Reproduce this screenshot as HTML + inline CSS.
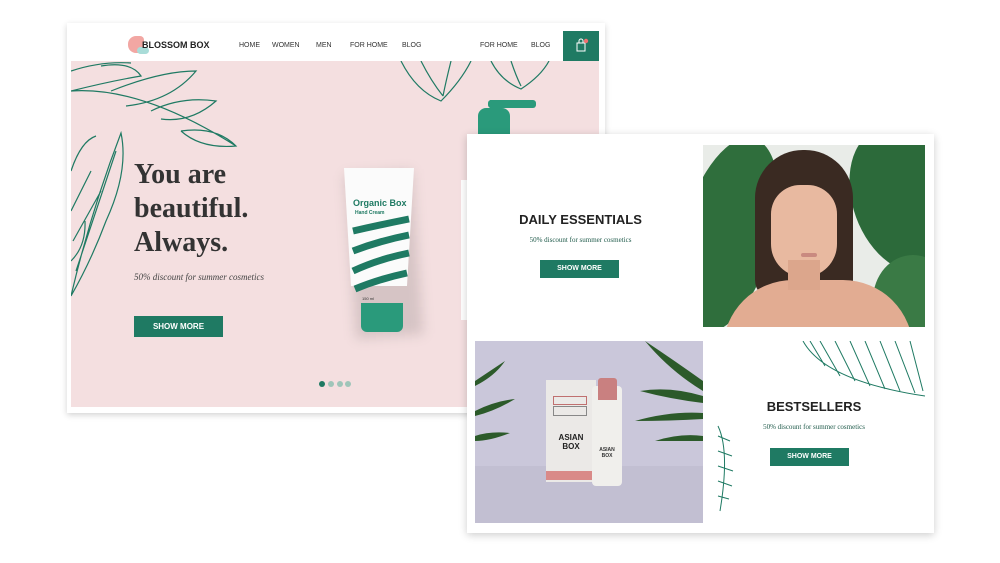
<!DOCTYPE html>
<html><head><meta charset="utf-8"><style>
*{margin:0;padding:0;box-sizing:border-box}
body{width:1000px;height:563px;background:#fff;position:relative;overflow:hidden;font-family:"Liberation Sans",sans-serif}
.abs{position:absolute}
.card1{left:67px;top:23px;width:538px;height:390px;background:#fff;box-shadow:0 2px 6px rgba(0,0,0,.18)}
.nav{font-size:7px;color:#333;top:42px}
.btn{background:#1f7a63;color:#fff;font-size:8px;text-align:center;font-weight:bold}
.serif{font-family:"Liberation Serif",serif}
</style></head><body>
<div class="abs card1"></div>
<!-- nav -->
<div class="abs" style="left:128px;top:36px;width:16px;height:17px;background:#f2a7a3;border-radius:8px 4px 6px 8px"></div>
<div class="abs" style="left:137px;top:47px;width:12px;height:7px;background:#a9dcd8;border-radius:4px"></div>
<div class="abs" style="left:142px;top:40px;font-size:9px;font-weight:bold;color:#222">BLOSSOM BOX</div>
<div class="abs nav" style="left:239px">HOME</div>
<div class="abs nav" style="left:272px">WOMEN</div>
<div class="abs nav" style="left:316px">MEN</div>
<div class="abs nav" style="left:350px">FOR HOME</div>
<div class="abs nav" style="left:402px">BLOG</div>
<div class="abs nav" style="left:480px">FOR HOME</div>
<div class="abs nav" style="left:531px">BLOG</div>
<div class="abs" style="left:563px;top:31px;width:36px;height:30px;background:#1f7a63"></div>
<svg class="abs" style="left:575px;top:38px" width="14" height="14" viewBox="0 0 14 14"><path d="M2 5h8v8H2z M4 5V3a2 2 0 0 1 4 0v2" fill="none" stroke="#fff" stroke-width="1"/><circle cx="11" cy="3" r="2.2" fill="#f07070"/></svg>
<!-- hero -->
<div class="abs" style="left:71px;top:61px;width:528px;height:346px;background:#f4dfe0"></div>
<svg class="abs" style="left:71px;top:61px" width="528" height="346" viewBox="0 0 528 346" fill="none" stroke="#1f7a63" stroke-width="1.2">
<path d="M0 30 Q70 25 165 85 M30 5 Q60 0 70 15 Q40 20 0 30 M40 30 Q90 10 125 10 Q100 40 55 45 M80 50 Q110 35 145 40 Q120 62 90 58 M110 70 Q145 65 165 85 Q130 88 110 70 M0 10 Q30 0 60 2"/>
<path d="M0 235 Q20 150 50 72 Q58 110 35 160 Q20 200 0 235 M5 210 L45 90 M2 180 L30 130 M0 150 L20 110"/>
<path d="M0 110 Q10 80 25 75 M0 200 Q15 185 14 160"/>
<path d="M330 0 Q345 30 370 40 Q390 20 400 0 M350 0 Q360 20 372 35 M380 0 Q375 20 372 35 M420 0 Q430 20 450 28 Q470 15 478 0 M440 0 Q445 15 450 25"/>
</svg>
<!-- pump bottle -->
<div class="abs" style="left:478px;top:108px;width:32px;height:26px;background:#2a9a7b;border-radius:8px 8px 0 0"></div>
<div class="abs" style="left:488px;top:100px;width:48px;height:8px;background:#2a9a7b;border-radius:3px"></div>
<div class="abs" style="left:490px;top:100px;width:8px;height:14px;background:#2a9a7b"></div>
<!-- tube -->
<div class="abs" style="left:350px;top:172px;width:68px;height:165px;background:rgba(0,0,0,.12);filter:blur(6px);transform:rotate(-4deg)"></div>
<div class="abs" style="left:344px;top:168px;width:70px;height:118px;background:#fbfbfb;clip-path:polygon(0 0,100% 0,90% 100%,10% 100%)"></div>
<div class="abs" style="left:353px;top:198px;font-size:9px;color:#1f7a63;font-weight:bold">Organic Box</div>
<div class="abs" style="left:355px;top:210px;font-size:5px;color:#1f7a63;font-weight:bold">Hand Cream</div>
<svg class="abs" style="left:349px;top:215px" width="62" height="80" viewBox="0 0 62 80" fill="none" stroke="#1f7a63" stroke-width="7"><path d="M4 16 Q30 10 60 4 M4 36 Q30 26 60 20 M4 56 Q30 44 60 38 M6 74 Q30 64 58 58"/></svg>
<div class="abs" style="left:362px;top:296px;font-size:4px;color:#333">150 ml</div>
<div class="abs" style="left:361px;top:303px;width:42px;height:29px;background:#2a9a7b;border-radius:0 0 6px 6px"></div>
<div class="abs" style="left:461px;top:180px;width:8px;height:140px;background:#fff"></div>
<div class="abs serif" style="left:134px;top:158px;font-size:28px;font-weight:bold;color:#333;line-height:34px">You are<br>beautiful.<br>Always.</div>
<div class="abs serif" style="left:134px;top:272px;font-size:9px;font-style:italic;color:#444">50% discount for summer cosmetics</div>
<div class="abs btn" style="left:134px;top:316px;width:89px;height:21px;line-height:21px">SHOW MORE</div>
<div class="abs" style="left:319px;top:381px;width:6px;height:6px;border-radius:3px;background:#1f7a63"></div>
<div class="abs" style="left:328px;top:381px;width:6px;height:6px;border-radius:3px;background:#9fc5b9"></div>
<div class="abs" style="left:337px;top:381px;width:6px;height:6px;border-radius:3px;background:#9fc5b9"></div>
<div class="abs" style="left:345px;top:381px;width:6px;height:6px;border-radius:3px;background:#9fc5b9"></div>
<!-- card 2 -->
<div class="abs" style="left:467px;top:134px;width:467px;height:399px;background:#fff;box-shadow:0 2px 8px rgba(0,0,0,.2)"></div>
<div class="abs" style="left:467px;top:212px;width:227px;text-align:center;font-size:13px;font-weight:bold;color:#222">DAILY ESSENTIALS</div>
<div class="abs serif" style="left:467px;top:236px;width:227px;text-align:center;font-size:7px;color:#1f5a4a">50% discount for summer cosmetics</div>
<div class="abs btn" style="left:540px;top:260px;width:79px;height:18px;line-height:18px;font-size:7px">SHOW MORE</div>
<!-- woman photo -->
<div class="abs" style="left:703px;top:145px;width:222px;height:182px;overflow:hidden;background:#e9ece8">
 <div class="abs" style="left:-20px;top:-10px;width:90px;height:200px;background:#2f6e3c;border-radius:50%;transform:rotate(15deg)"></div>
 <div class="abs" style="left:150px;top:-20px;width:100px;height:150px;background:#2c6a3a;border-radius:50%;transform:rotate(-20deg)"></div>
 <div class="abs" style="left:170px;top:110px;width:80px;height:90px;background:#3a7a45;border-radius:50%"></div>
 <div class="abs" style="left:52px;top:5px;width:98px;height:150px;background:#3a2a22;border-radius:48px 48px 20px 20px"></div>
 <div class="abs" style="left:68px;top:40px;width:66px;height:92px;background:#e8b9a0;border-radius:30px 30px 34px 34px"></div>
 <div class="abs" style="left:20px;top:135px;width:190px;height:70px;background:#e2ac92;border-radius:80px 80px 0 0"></div>
 <div class="abs" style="left:85px;top:115px;width:32px;height:30px;background:#dca68c"></div>
 <div class="abs" style="left:98px;top:108px;width:16px;height:4px;background:#c98a80;border-radius:3px"></div>
</div>
<!-- product photo -->
<div class="abs" style="left:475px;top:341px;width:228px;height:182px;background:#cac7da;overflow:hidden">
 <div class="abs" style="left:0;top:125px;width:228px;height:57px;background:#c2bfd2"></div>
 <svg class="abs" style="left:0;top:0" width="228" height="182" fill="#2c5a2a"><path d="M0 40 Q15 30 30 20 Q20 35 0 45Z M0 70 Q20 60 40 58 Q20 70 0 75Z M0 95 Q15 90 35 92 Q15 100 0 100Z M170 0 Q200 20 228 40 L228 50 Q195 30 170 0Z M165 50 Q195 45 228 55 L228 62 Q195 58 165 50Z M160 80 Q195 70 228 72 L228 78 Q195 80 160 80Z M180 100 Q205 92 228 95 L228 100 Q205 100 180 100Z"/></svg>
 <div class="abs" style="left:71px;top:39px;width:50px;height:102px;background:#ebe9e7"></div>
 <div class="abs" style="left:71px;top:130px;width:50px;height:9px;background:#d98a88"></div>
 <div class="abs" style="left:78px;top:55px;width:34px;height:9px;border:1px solid #c07070"></div>
 <div class="abs" style="left:78px;top:65px;width:34px;height:10px;border:1px solid #888"></div>
 <div class="abs" style="left:71px;top:92px;width:50px;text-align:center;font-size:8px;font-weight:bold;color:#222;line-height:9px">ASIAN<br>BOX</div>
 <div class="abs" style="left:117px;top:45px;width:30px;height:100px;background:#f0efec;border-radius:4px"></div>
 <div class="abs" style="left:123px;top:37px;width:19px;height:22px;background:#c98080;border-radius:3px 3px 0 0"></div>
 <div class="abs" style="left:117px;top:106px;width:30px;text-align:center;font-size:5px;font-weight:bold;color:#333;line-height:6px">ASIAN<br>BOX</div>
</div>
<svg class="abs" style="left:715px;top:341px" width="212" height="180" fill="none" stroke="#1f7a63" stroke-width="1"><path d="M88 0 Q110 40 210 55 M95 0 L110 25 M105 0 L125 35 M120 0 L140 40 M135 0 L155 45 M150 0 L170 48 M165 0 L185 50 M180 0 L200 52 M195 0 L208 50"/><path d="M3 85 Q15 110 5 170 M3 95 L15 100 M3 110 L17 115 M3 125 L18 130 M3 140 L17 145 M3 155 L14 158"/></svg>
<div class="abs" style="left:703px;top:399px;width:222px;text-align:center;font-size:13px;font-weight:bold;color:#222">BESTSELLERS</div>
<div class="abs serif" style="left:703px;top:423px;width:222px;text-align:center;font-size:7px;color:#1f5a4a">50% discount for summer cosmetics</div>
<div class="abs btn" style="left:770px;top:448px;width:79px;height:18px;line-height:18px;font-size:7px">SHOW MORE</div>
</body></html>
